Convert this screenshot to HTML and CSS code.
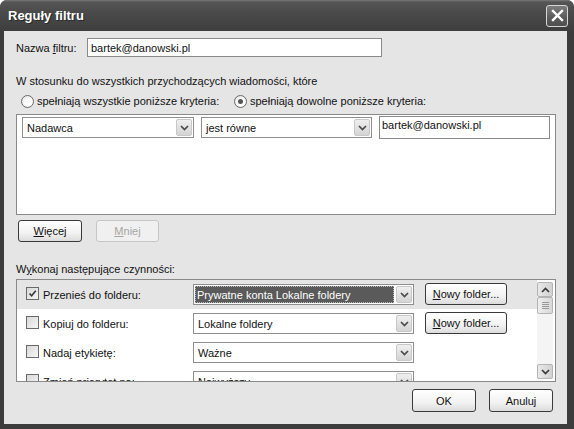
FILE: index.html
```html
<!DOCTYPE html>
<html lang="pl">
<head>
<meta charset="utf-8">
<title>Reguły filtru</title>
<link rel="stylesheet" href="styles.css">
</head>
<body>
<div class="window">
  <div class="titlebar">
    <span class="title">Reguły filtru</span>
    <div class="close">
      <svg width="13" height="13" viewBox="0 0 13 13"><path d="M2 2 L11 11 M11 2 L2 11" stroke="#fff" stroke-width="2.4" stroke-linecap="square"/></svg>
    </div>
  </div>
  <div class="client">
    <div class="name-row">
      <span class="lbl-name">Nazwa <u>f</u>iltru:</span>
      <div class="textbox name-box">bartek@danowski.pl</div>
    </div>
    <div class="intro">W stosunku do wszystkich przychodzących wiadomości, które</div>
    <div class="radio-row">
      <span class="radio r-first"></span><span class="rtext rtext-first">spełniają wszystkie poniższe kryteria:</span>
      <span class="radio on"></span><span class="rtext">spełniają dowolne poniższe kryteria:</span>
    </div>
    <div class="crit-box">
      <div class="crit-row">
        <div class="combo c-field"><span class="ctext">Nadawca</span><span class="arrow"><svg width="9" height="6" viewBox="0 0 9 6"><path d="M1 1 L4.5 4.5 L8 1" fill="none" stroke="#4a4a4a" stroke-width="1.7"/></svg></span></div>
        <div class="combo c-op"><span class="ctext">jest równe</span><span class="arrow"><svg width="9" height="6" viewBox="0 0 9 6"><path d="M1 1 L4.5 4.5 L8 1" fill="none" stroke="#4a4a4a" stroke-width="1.7"/></svg></span></div>
        <div class="textbox c-val">bartek@danowski.pl</div>
      </div>
    </div>
    <div class="btn-row">
      <div class="btn b-more"><span><u>W</u>ięcej</span></div>
      <div class="btn b-less disabled"><span><u>M</u>niej</span></div>
    </div>
    <div class="section-label">W<u>y</u>konaj następujące czynności:</div>
    <div class="act-box">
      <div class="act-list">
        <div class="act-row sel">
          <div class="act-check"><span class="check on"><svg width="11" height="11" viewBox="0 0 11 11"><path d="M2.5 5.5 L4.6 7.8 L8.8 2.8" fill="none" stroke="#3a3a3a" stroke-width="1.6"/></svg></span><span>Przenieś do folderu:</span></div>
          <div class="combo act-combo"><span class="ctext hl"><span class="hltext">Prywatne konta Lokalne foldery</span></span><span class="arrow"><svg width="9" height="6" viewBox="0 0 9 6"><path d="M1 1 L4.5 4.5 L8 1" fill="none" stroke="#4a4a4a" stroke-width="1.7"/></svg></span></div>
          <div class="btn b-folder"><span><u>N</u>owy folder...</span></div>
        </div>
        <div class="act-row">
          <div class="act-check"><span class="check"></span><span>Kopiuj do folderu:</span></div>
          <div class="combo act-combo"><span class="ctext">Lokalne foldery</span><span class="arrow"><svg width="9" height="6" viewBox="0 0 9 6"><path d="M1 1 L4.5 4.5 L8 1" fill="none" stroke="#4a4a4a" stroke-width="1.7"/></svg></span></div>
          <div class="btn b-folder"><span><u>N</u>owy folder...</span></div>
        </div>
        <div class="act-row">
          <div class="act-check"><span class="check"></span><span>Nadaj etykietę:</span></div>
          <div class="combo act-combo"><span class="ctext">Ważne</span><span class="arrow"><svg width="9" height="6" viewBox="0 0 9 6"><path d="M1 1 L4.5 4.5 L8 1" fill="none" stroke="#4a4a4a" stroke-width="1.7"/></svg></span></div>
        </div>
        <div class="act-row">
          <div class="act-check"><span class="check"></span><span>Zmień priorytet na:</span></div>
          <div class="combo act-combo"><span class="ctext">Najwyższy</span><span class="arrow"><svg width="9" height="6" viewBox="0 0 9 6"><path d="M1 1 L4.5 4.5 L8 1" fill="none" stroke="#4a4a4a" stroke-width="1.7"/></svg></span></div>
        </div>
      </div>
      <div class="scrollbar">
        <div class="sb-btn"><svg width="9" height="6" viewBox="0 0 9 6"><path d="M1 5 L4.5 1.5 L8 5" fill="none" stroke="#3a3a3a" stroke-width="1.7"/></svg></div>
        <div class="sb-thumb"><span></span><span></span><span></span><span></span></div>
        <div class="sb-track"></div>
        <div class="sb-btn"><svg width="9" height="6" viewBox="0 0 9 6"><path d="M1 1 L4.5 4.5 L8 1" fill="none" stroke="#3a3a3a" stroke-width="1.7"/></svg></div>
      </div>
    </div>
    <div class="footer">
      <div class="btn b-ok"><span>OK</span></div>
      <div class="btn b-cancel"><span>Anuluj</span></div>
    </div>
  </div>
</div>
</body>
</html>
```

FILE: styles.css
```css
html, body {
  margin: 0;
  padding: 0;
  background: #fff;
}
body {
  font-family: "Liberation Sans", Arial, sans-serif;
  font-size: 11px;
  color: #111;
}
.window {
  width: 574px;
  height: 429px;
  display: flex;
  flex-direction: column;
  background: #3c3c3c;
  border-radius: 7px 7px 0 0;
  overflow: hidden;
}
.titlebar {
  height: 31px;
  flex: none;
  box-sizing: border-box;
  display: flex;
  align-items: center;
  justify-content: space-between;
  padding: 0 6px 0 8px;
  background: linear-gradient(#7a7a7a 0, #555 2px, #4a4a4a 40%, #3e3e3e 100%);
}
.title {
  color: #fff;
  font-weight: bold;
  font-size: 13px;
  text-shadow: 1px 1px 0 #2a2a2a;
}
.close {
  width: 22px;
  height: 22px;
  box-sizing: border-box;
  border: 1px solid #d6d6d6;
  border-radius: 3px;
  background: linear-gradient(#7c7c7c, #5a5a5a 60%, #4e4e4e);
  display: flex;
  align-items: center;
  justify-content: center;
}
.client {
  flex: 1;
  margin: 0 7px 5px 4px;
  padding-left: 12px;
  background: #e5e5e5;
  display: flex;
  flex-direction: column;
}
.name-row {
  margin-top: 7px;
  height: 19px;
  display: flex;
  align-items: center;
}
.lbl-name {
  width: 71px;
}
.textbox {
  box-sizing: border-box;
  background: #fff;
  border: 1px solid #8a8a8a;
  display: flex;
  align-items: center;
  padding: 0 3px;
}
.name-box {
  width: 295px;
  height: 19px;
}
.intro {
  margin-top: 17px;
  line-height: 14px;
  height: 14px;
}
.radio-row {
  margin-top: 6px;
  height: 14px;
  display: flex;
  align-items: center;
}
.radio {
  width: 13px;
  height: 13px;
  box-sizing: border-box;
  border-radius: 50%;
  border: 1px solid #6a6a6a;
  background: radial-gradient(circle at 60% 60%, #fff 30%, #e2e2e2 90%);
  display: flex;
  align-items: center;
  justify-content: center;
  flex: none;
}
.r-first {
  margin-left: 5px;
}
.radio.on::after {
  content: "";
  width: 5px;
  height: 5px;
  border-radius: 50%;
  background: #555;
}
.rtext {
  margin-left: 3px;
}
.rtext-first {
  width: 197px;
}
.crit-box {
  margin-top: 6px;
  width: 540px;
  height: 101px;
  box-sizing: border-box;
  border: 1px solid #8a8a8a;
  background: #fff;
}
.crit-row {
  display: flex;
  align-items: flex-start;
  padding: 2px 0 0 5px;
}
.combo {
  box-sizing: border-box;
  height: 21px;
  border: 1px solid #8f8f8f;
  background: #fff;
  display: flex;
  align-items: stretch;
  flex: none;
}
.ctext {
  flex: 1;
  display: flex;
  align-items: center;
  padding-left: 4px;
  white-space: nowrap;
  overflow: hidden;
}
.arrow {
  width: 16px;
  margin: 1px;
  box-sizing: border-box;
  border: 1px solid #c8c8c8;
  border-radius: 2px;
  background: linear-gradient(#efefef, #d4d4d4);
  display: flex;
  align-items: center;
  justify-content: center;
}
.c-field {
  width: 172px;
}
.c-op {
  width: 171px;
  margin-left: 7px;
}
.c-val {
  width: 171px;
  height: 23px;
  margin-left: 7px;
  margin-top: -1px;
  align-items: flex-start;
  padding: 2px 2px 0;
}
.btn-row {
  margin-top: 5px;
  height: 22px;
  display: flex;
}
.btn {
  box-sizing: border-box;
  height: 22px;
  border: 1px solid #3a3a3a;
  border-radius: 3px;
  background: linear-gradient(#ffffff, #f2f2f2 60%, #dcdcdc);
  display: flex;
  align-items: center;
  justify-content: center;
  flex: none;
  white-space: nowrap;
}
.btn.disabled {
  border-color: #c6c6c6;
  color: #a6a6a6;
  background: #f0f0f0;
}
.b-more {
  width: 64px;
  margin-left: 2px;
}
.b-less {
  width: 63px;
  margin-left: 14px;
}
.section-label {
  margin-top: 20px;
  line-height: 14px;
  height: 14px;
}
.act-box {
  margin-top: 3px;
  width: 540px;
  height: 103px;
  box-sizing: border-box;
  border: 1px solid #8a8a8a;
  background: #fff;
  display: flex;
  overflow: hidden;
}
.act-list {
  flex: 1;
  overflow: hidden;
}
.act-row {
  height: 29px;
  box-sizing: border-box;
  padding-top: 4px;
  display: flex;
  align-items: flex-start;
}
.act-row.sel {
  background: #e5e5e5;
}
.act-check {
  margin-left: 9px;
  width: 167px;
  height: 21px;
  display: flex;
  align-items: center;
  flex: none;
}
.check {
  width: 13px;
  height: 13px;
  box-sizing: border-box;
  border: 1px solid #6a6a6a;
  background: linear-gradient(135deg, #d8d8d8, #f6f6f6);
  margin-right: 4px;
  margin-top: -2px;
  display: flex;
  align-items: center;
  justify-content: center;
  flex: none;
}
.act-combo {
  width: 221px;
}
.hl {
  padding: 1px;
}
.hltext {
  flex: 1;
  height: 100%;
  box-sizing: border-box;
  background: #5a5a5a;
  color: #fff;
  outline: 1px dotted #bbb;
  outline-offset: -1px;
  display: flex;
  align-items: center;
  padding-left: 2px;
}
.b-folder {
  width: 82px;
  margin-left: 11px;
  margin-top: -1px;
}
.scrollbar {
  width: 16px;
  margin: 2px 2px 2px 0;
  background: #f4f4f4;
  display: flex;
  flex-direction: column;
  flex: none;
}
.sb-btn {
  height: 15px;
  box-sizing: border-box;
  border: 1px solid #b4b4b4;
  border-radius: 2px;
  background: linear-gradient(90deg, #e8e8e8, #d2d2d2);
  display: flex;
  align-items: center;
  justify-content: center;
}
.sb-thumb {
  height: 17px;
  box-sizing: border-box;
  border: 1px solid #b4b4b4;
  border-radius: 2px;
  background: linear-gradient(90deg, #eeeeee, #d8d8d8);
  display: flex;
  flex-direction: column;
  align-items: center;
  justify-content: center;
  gap: 1px;
}
.sb-thumb span {
  width: 7px;
  height: 1px;
  background: #9a9a9a;
}
.sb-track {
  flex: 1;
}
.footer {
  margin-top: 7px;
  height: 23px;
  display: flex;
  justify-content: flex-end;
  padding-right: 14px;
}
.footer .btn {
  height: 23px;
}
.b-ok {
  width: 64px;
}
.b-cancel {
  width: 64px;
  margin-left: 13px;
}
```
